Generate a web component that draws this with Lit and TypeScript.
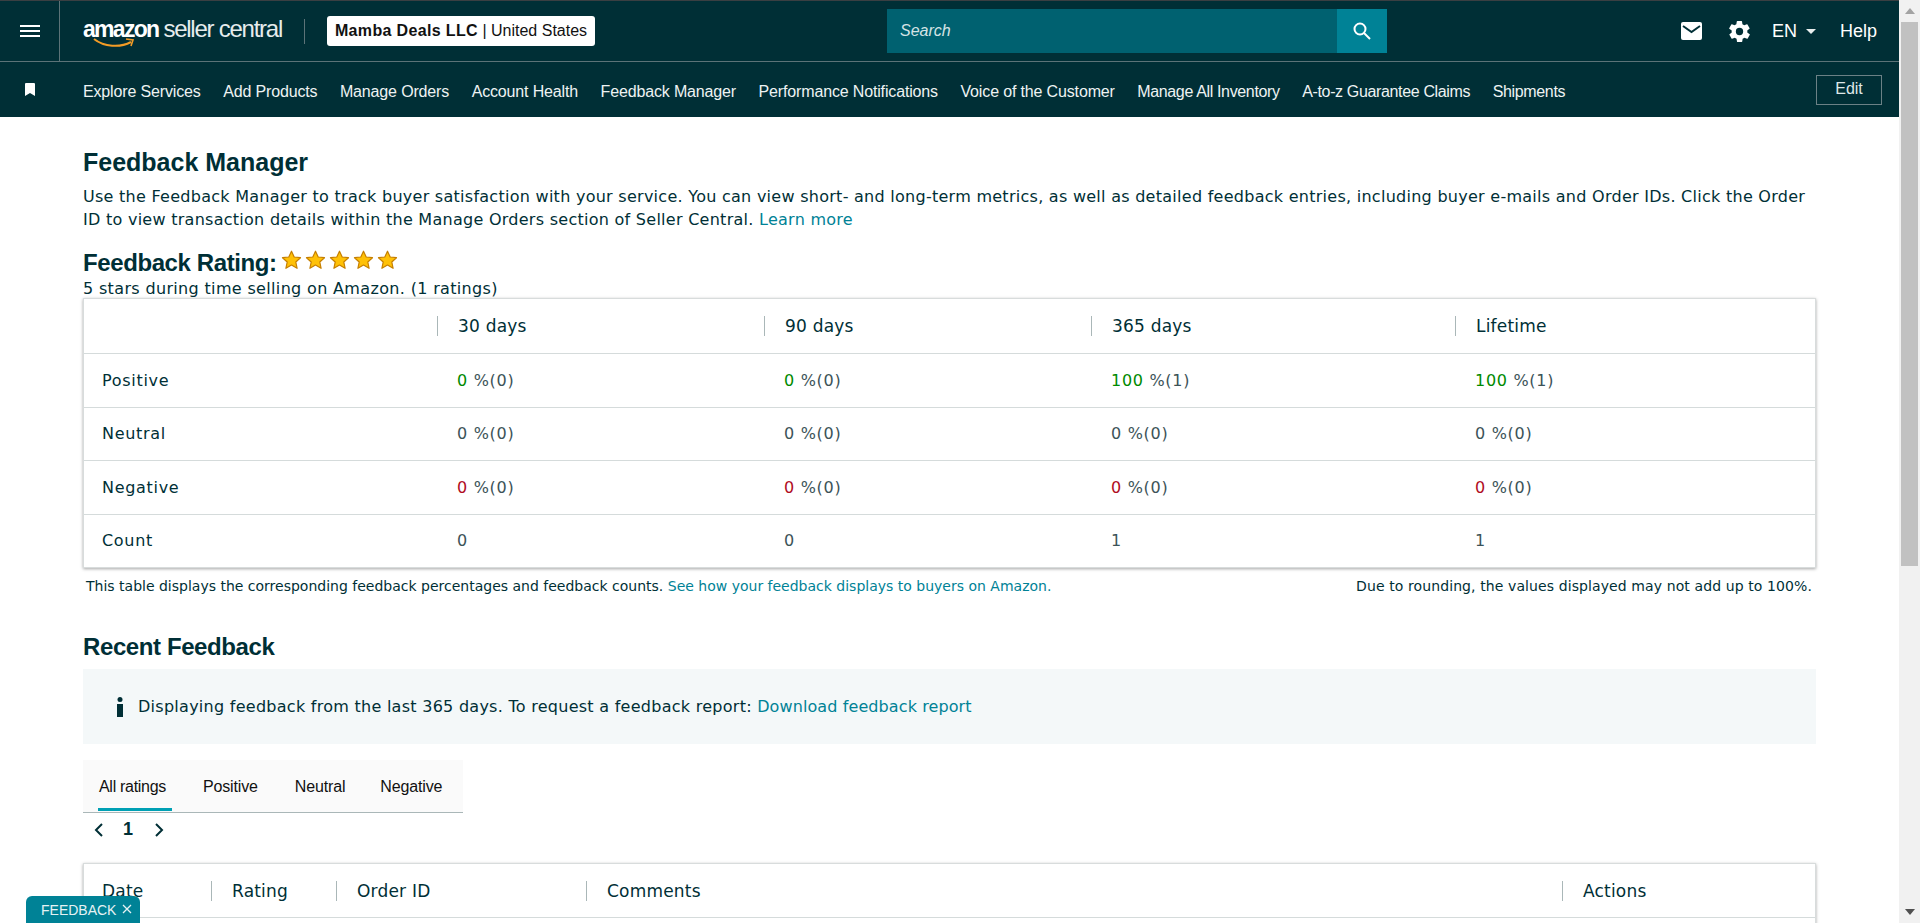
import { LitElement, html, css, svg } from "lit";
import { customElement } from "lit/decorators.js";

const navLinks = [
  "Explore Services",
  "Add Products",
  "Manage Orders",
  "Account Health",
  "Feedback Manager",
  "Performance Notifications",
  "Voice of the Customer",
];
const navLinksTight = ["Manage All Inventory", "A-to-z Guarantee Claims", "Shipments"];

const summaryHeads = ["30 days", "90 days", "365 days", "Lifetime"];
const recentHeads = ["Rating", "Order ID", "Comments", "Actions"];
const tabs = ["All ratings", "Positive", "Neutral", "Negative"];
const tabGaps = [16, 37, 37, 35];

const star = svg`<polygon points="10,1.2 12.7,7 19,7.7 14.3,12 15.6,18.3 10,15.1 4.4,18.3 5.7,12 1,7.7 7.3,7" fill="#ffc107" stroke="#c67f00" stroke-width="1.2" stroke-linejoin="round"/>`;

@customElement("app-root")
export class AppRoot extends LitElement {
  static styles = css`
    :host {
      display: flex;
      height: 923px;
      overflow: hidden;
      position: relative;
      background: #fff;
      font-family: "DejaVu Sans", Verdana, sans-serif;
      color: #002f36;
    }
    a {
      color: #008296;
      text-decoration: none;
    }
    .page {
      flex: 1;
      min-width: 0;
    }
    .scrollbar {
      width: 21px;
      background: #f1f1f1;
      display: flex;
      flex-direction: column;
      align-items: center;
      flex: none;
    }
    .arrow {
      height: 22px;
      flex: none;
      display: flex;
      align-items: center;
      justify-content: center;
    }
    .thumb {
      width: 17px;
      height: 544px;
      background: #c1c1c1;
      flex: none;
    }
    .spacer {
      flex: 1;
    }

    .topbar {
      height: 62px;
      box-sizing: border-box;
      background: #002f36;
      border-top: 1px solid #3a3f42;
      border-bottom: 1px solid #5c7378;
      display: flex;
      align-items: center;
      font-family: "Liberation Sans", Arial, sans-serif;
      color: #fff;
    }
    .menu {
      width: 60px;
      box-sizing: border-box;
      height: 100%;
      border-right: 1px solid #5c7378;
      display: flex;
      align-items: center;
      justify-content: center;
      flex: none;
    }
    .logo {
      margin-left: 23px;
      width: 198px;
      height: 32px;
      position: relative;
      white-space: nowrap;
      flex: none;
    }
    .logo b {
      font-size: 23px;
      letter-spacing: -1.7px;
      line-height: 28px;
    }
    .logo span {
      font-size: 24px;
      letter-spacing: -1.25px;
      font-weight: 400;
      line-height: 28px;
      margin-left: 5px;
      color: #e6eced;
    }
    .smile {
      position: absolute;
      left: 10px;
      top: 22px;
    }
    .logo-div {
      width: 1px;
      height: 25px;
      background: #5c7378;
      margin-left: 23px;
      flex: none;
    }
    .account {
      margin-left: 22px;
      width: 268px;
      height: 30px;
      box-sizing: border-box;
      background: #fff;
      border-radius: 3px;
      color: #111;
      font-size: 16px;
      display: flex;
      align-items: center;
      justify-content: center;
      flex: none;
      white-space: pre;
    }
    .account b {
      font-weight: 700;
      letter-spacing: 0.35px;
    }
    .search {
      margin-left: 292px;
      width: 500px;
      height: 44px;
      display: flex;
      flex: none;
    }
    .search-input {
      flex: 1;
      background: #006170;
      color: #d5e3e5;
      font-style: italic;
      font-size: 16px;
      padding-left: 13px;
      display: flex;
      align-items: center;
    }
    .search-btn {
      width: 50px;
      background: #008296;
      display: flex;
      align-items: center;
      justify-content: center;
    }
    .tools {
      margin-left: auto;
      display: flex;
      align-items: center;
      font-size: 18px;
      padding-right: 22px;
    }
    .mail {
      margin-right: 27px;
      display: flex;
    }
    .gear {
      margin-right: 22px;
      display: flex;
    }
    .lang {
      display: flex;
      align-items: center;
      gap: 9px;
      margin-right: 24px;
    }
    .caret {
      width: 0;
      height: 0;
      border-left: 5.5px solid transparent;
      border-right: 5.5px solid transparent;
      border-top: 5px solid #e8eeee;
      margin-top: 1px;
    }

    .navbar {
      height: 55px;
      background: #002f36;
      display: flex;
      font-family: "Liberation Sans", Arial, sans-serif;
      color: #fff;
      font-size: 16px;
    }
    .bookmark {
      width: 60px;
      display: flex;
      justify-content: center;
      padding-top: 21px;
      box-sizing: border-box;
      flex: none;
    }
    .nav-links {
      margin-left: 23px;
      display: flex;
      gap: 22.5px;
      align-items: center;
      height: 55px;
      padding-top: 4px;
      box-sizing: border-box;
      letter-spacing: -0.15px;
      color: #eef3f3;
    }
    .nav-links .tight {
      letter-spacing: -0.35px;
    }
    .edit {
      margin-left: auto;
      margin-right: 17px;
      margin-top: 13px;
      width: 66px;
      height: 30px;
      box-sizing: border-box;
      border: 1px solid #6c8186;
      color: #dfe7e8;
      display: flex;
      align-items: center;
      justify-content: center;
      font-size: 16px;
      padding-bottom: 2px;
    }

    .content {
      padding: 0 83px;
    }
    h1 {
      margin: 0;
      font: 700 25px/30px "Liberation Sans", Arial, sans-serif;
      padding-top: 30px;
    }
    .intro {
      font-size: 16px;
      line-height: 23px;
      margin: 8px 0 0;
      letter-spacing: 0.27px;
    }
    .rating-head {
      display: flex;
      align-items: center;
      gap: 4px;
      margin-top: 16px;
      height: 32px;
    }
    .rating-head h2 {
      margin: 0;
      font: 700 24px/30px "Liberation Sans", Arial, sans-serif;
      letter-spacing: -0.4px;
    }
    .stars {
      display: flex;
      gap: 3px;
      margin-top: -6px;
    }
    .stars svg {
      width: 21px;
      height: 20px;
    }
    .rating-sub {
      font-size: 16px;
      line-height: 18px;
      letter-spacing: 0.34px;
      margin-top: 1px;
    }
    .card {
      border: 1px solid #d8dcdc;
      box-shadow: 0 1px 3px rgba(0, 0, 0, 0.35);
      background: #fff;
      font-size: 16px;
      letter-spacing: 0.7px;
    }
    .row {
      display: grid;
      grid-template-columns: 353px 327px 327px 364px 1fr;
      height: 53.5px;
      align-items: center;
      border-top: 1px solid #d5dbdb;
      box-sizing: border-box;
    }
    .row.head {
      height: 54px;
      border-top: 0;
      font-size: 17px;
      letter-spacing: 0.2px;
    }
    .row > div {
      padding-left: 20px;
    }
    .row > .label {
      padding-left: 18px;
    }
    .row.head > div:not(.label) {
      border-left: 1px solid #aab7b8;
      height: 20px;
      line-height: 20px;
    }
    .val {
      color: #3c5358;
    }
    .pos {
      color: #008a00;
    }
    .neg {
      color: #b00c1e;
    }
    .notes {
      display: flex;
      justify-content: space-between;
      font-size: 14px;
      line-height: 18px;
      padding: 9px 4px 0 3px;
    }
    .notes .right {
      letter-spacing: 0.1px;
    }
    h3 {
      margin: 0;
      font: 700 24px/30px "Liberation Sans", Arial, sans-serif;
      letter-spacing: -0.4px;
      padding-top: 37px;
    }
    .info {
      margin-top: 7px;
      height: 75px;
      background: #f4f8f9;
      display: flex;
      align-items: center;
      font-size: 16px;
      letter-spacing: 0.27px;
      padding-left: 33px;
      box-sizing: border-box;
    }
    .info a {
      letter-spacing: 0.1px;
    }
    .info svg {
      margin-right: 14px;
      flex: none;
    }
    .tabs {
      margin-top: 16px;
      width: 380px;
      height: 53px;
      background: #fafafa;
      border-bottom: 1px solid #aab7b8;
      box-sizing: border-box;
      display: flex;
      font: 16px "Liberation Sans", Arial, sans-serif;
      color: #111;
      letter-spacing: -0.15px;
    }
    .tab {
      position: relative;
      padding-top: 18px;
    }
    .tab.on {
      letter-spacing: -0.3px;
    }
    .tab.on::after {
      content: "";
      position: absolute;
      left: -1px;
      right: -6px;
      bottom: 1px;
      height: 3px;
      background: #00a0b4;
    }
    .pager {
      display: flex;
      align-items: center;
      height: 33px;
      padding-left: 11px;
      font: 700 18px "Liberation Sans", Arial, sans-serif;
    }
    .pager span {
      margin: 0 21px 0 19px;
    }
    .recent {
      margin-top: 17px;
      height: 120px;
    }
    .recent .row {
      grid-template-columns: 127px 125px 250px 976px 1fr;
      height: 54px;
      border-bottom: 1px solid #d5dbdb;
    }
    .feedback {
      position: absolute;
      left: 26px;
      bottom: 0;
      width: 114px;
      height: 27px;
      background: #008296;
      border-radius: 6px 6px 0 0;
      color: #e6f2f4;
      font: 14px "Liberation Sans", Arial, sans-serif;
      display: flex;
      align-items: center;
      padding-left: 15px;
      box-sizing: border-box;
      gap: 6px;
    }
    .feedback svg {
      margin-top: -2px;
    }
  `;

  private summaryRow(label: string, cls: string, counts: string[]) {
    return html`
      <div class="row">
        <div class="label">${label}</div>
        ${counts.map(
          (c) => html`<div class="val"><span class=${cls}>${c}</span> %(${c === "100" ? 1 : 0})</div>`
        )}
      </div>
    `;
  }

  render() {
    return html`
      <div class="page">
        <div class="topbar">
          <div class="menu">
            <svg width="20" height="12" viewBox="0 0 20 12"><path d="M0 1h20M0 6h20M0 11h20" stroke="#fff" stroke-width="2"/></svg>
          </div>
          <div class="logo">
            <b>amazon</b><span>seller central</span>
            <svg class="smile" width="42" height="12" viewBox="0 0 42 12">
              <path d="M1 2c10 8 26 9 37 3" fill="none" stroke="#f39c26" stroke-width="2"/>
              <path d="M33 2l7 1-2 6" fill="none" stroke="#f39c26" stroke-width="1.6"/>
            </svg>
          </div>
          <div class="logo-div"></div>
          <div class="account"><b>Mamba Deals LLC</b> | United States</div>
          <div class="search">
            <div class="search-input">Search</div>
            <div class="search-btn">
              <svg width="20" height="20" viewBox="0 0 20 20"><circle cx="8" cy="8" r="5.5" fill="none" stroke="#fff" stroke-width="2"/><path d="M12 12l6 6" stroke="#fff" stroke-width="2"/></svg>
            </div>
          </div>
          <div class="tools">
            <div class="mail">
              <svg width="21" height="18" viewBox="0 0 21 18"><rect width="21" height="18" rx="2" fill="#fff"/><path d="M2 4l8.5 6L19 4" fill="none" stroke="#002f36" stroke-width="2"/></svg>
            </div>
            <div class="gear">
              <svg width="21" height="21" viewBox="2 2 20 20"><path fill="#fff" d="M19.4 13a7.6 7.6 0 0 0 0-2l2.1-1.6a.5.5 0 0 0 .1-.6l-2-3.5a.5.5 0 0 0-.6-.2l-2.5 1a7.3 7.3 0 0 0-1.7-1l-.4-2.6a.5.5 0 0 0-.5-.5h-4a.5.5 0 0 0-.5.4l-.4 2.7a7.7 7.7 0 0 0-1.7 1l-2.5-1a.5.5 0 0 0-.6.2l-2 3.5a.5.5 0 0 0 .1.6L4.6 11a7.9 7.9 0 0 0 0 2l-2.1 1.6a.5.5 0 0 0-.1.6l2 3.5c.1.2.4.3.6.2l2.5-1c.5.4 1.1.7 1.7 1l.4 2.6c0 .3.2.5.5.5h4c.3 0 .5-.2.5-.4l.4-2.7a7.7 7.7 0 0 0 1.7-1l2.5 1c.2.1.5 0 .6-.2l2-3.5a.5.5 0 0 0-.1-.6L19.4 13zM12 15.5a3.5 3.5 0 1 1 0-7 3.5 3.5 0 0 1 0 7z"/></svg>
            </div>
            <div class="lang">EN<i class="caret"></i></div>
            <div>Help</div>
          </div>
        </div>

        <div class="navbar">
          <div class="bookmark">
            <svg width="12" height="13" viewBox="0 0 12 13"><path d="M2 0h8a1 1 0 0 1 1 1v12l-5-3-5 3V1a1 1 0 0 1 1-1z" fill="#fff"/></svg>
          </div>
          <div class="nav-links">
            ${navLinks.map((l) => html`<span>${l}</span>`)}
            ${navLinksTight.map((l) => html`<span class="tight">${l}</span>`)}
          </div>
          <div class="edit">Edit</div>
        </div>

        <div class="content">
          <h1>Feedback Manager</h1>
          <p class="intro">
            Use the Feedback Manager to track buyer satisfaction with your service. You can view short- and long-term metrics, as well as detailed feedback entries, including buyer e-mails and Order IDs. Click the Order ID to view transaction details within the Manage Orders section of Seller Central.
            <a>Learn more</a>
          </p>

          <div class="rating-head">
            <h2>Feedback Rating:</h2>
            <div class="stars">${[1, 2, 3, 4, 5].map(() => html`<svg viewBox="0 0 20 20">${star}</svg>`)}</div>
          </div>
          <div class="rating-sub">5 stars during time selling on Amazon. (1 ratings)</div>

          <div class="card">
            <div class="row head">
              <div class="label"></div>
              ${summaryHeads.map((h) => html`<div>${h}</div>`)}
            </div>
            ${this.summaryRow("Positive", "pos", ["0", "0", "100", "100"])}
            ${this.summaryRow("Neutral", "val", ["0", "0", "0", "0"])}
            ${this.summaryRow("Negative", "neg", ["0", "0", "0", "0"])}
            <div class="row">
              <div class="label">Count</div>
              <div class="val">0</div>
              <div class="val">0</div>
              <div class="val">1</div>
              <div class="val">1</div>
            </div>
          </div>
          <div class="notes">
            <div>This table displays the corresponding feedback percentages and feedback counts. <a>See how your feedback displays to buyers on Amazon.</a></div>
            <div class="right">Due to rounding, the values displayed may not add up to 100%.</div>
          </div>

          <h3>Recent Feedback</h3>
          <div class="info">
            <svg width="8" height="20" viewBox="0 0 8 20"><circle cx="4" cy="2.5" r="2.5" fill="#002f36"/><path d="M1 7h6v13H1z" fill="#002f36"/></svg>
            <div>Displaying feedback from the last 365 days. To request a feedback report: <a>Download feedback report</a></div>
          </div>

          <div class="tabs">
            ${tabs.map(
              (t, i) => html`<div class="tab ${i === 0 ? "on" : ""}" style="margin-left: ${tabGaps[i]}px">${t}</div>`
            )}
          </div>
          <div class="pager">
            <svg width="10" height="14" viewBox="0 0 10 14"><path d="M8 1L2 7l6 6" fill="none" stroke="#002f36" stroke-width="2"/></svg>
            <span>1</span>
            <svg width="10" height="14" viewBox="0 0 10 14"><path d="M2 1l6 6-6 6" fill="none" stroke="#002f36" stroke-width="2"/></svg>
          </div>

          <div class="card recent">
            <div class="row head">
              <div class="label">Date</div>
              ${recentHeads.map((h) => html`<div>${h}</div>`)}
            </div>
          </div>
        </div>
      </div>

      <div class="scrollbar">
        <div class="arrow"><svg width="10" height="6" viewBox="0 0 10 6"><path d="M5 0l5 6H0z" fill="#a3a3a3"/></svg></div>
        <div class="thumb"></div>
        <div class="spacer"></div>
        <div class="arrow"><svg width="10" height="6" viewBox="0 0 10 6"><path d="M5 6L0 0h10z" fill="#505050"/></svg></div>
      </div>

      <div class="feedback">
        FEEDBACK
        <svg width="10" height="10" viewBox="0 0 10 10"><path d="M1 1l8 8M9 1l-8 8" stroke="#e6f2f4" stroke-width="1.3"/></svg>
      </div>
    `;
  }
}
